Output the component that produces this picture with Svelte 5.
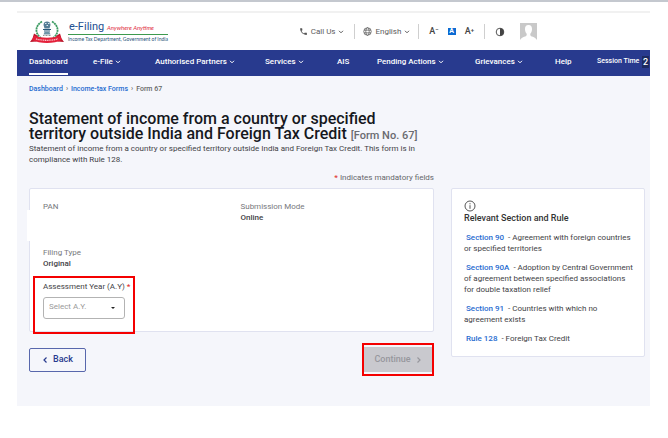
<script lang="ts">
  const menu = [
    { label: "Dashboard", active: true, arrow: false },
    { label: "e-File", active: false, arrow: true },
    { label: "Authorised Partners", active: false, arrow: true },
    { label: "Services", active: false, arrow: true },
    { label: "AIS", active: false, arrow: false },
    { label: "Pending Actions", active: false, arrow: true },
    { label: "Grievances", active: false, arrow: true },
    { label: "Help", active: false, arrow: false },
  ];

  const rules = [
    { name: "Section 90", text: "Agreement with foreign countries or specified territories" },
    {
      name: "Section 90A",
      text: "Adoption by Central Government of agreement between specified associations for double taxation relief",
    },
    { name: "Section 91", text: "Countries with which no agreement exists" },
    { name: "Rule 128", text: "Foreign Tax Credit" },
  ];

  let year = $state("");
</script>

{#snippet chevron()}
  <svg class="chevron" viewBox="0 0 6 4"><path d="M1 .8l2 2 2-2" /></svg>
{/snippet}

<div class="page">
  <header class="top">
    <a class="brand" href="#home">
      <svg class="emblem" viewBox="0 0 36 24">
        <path d="M12 1.5C4.500 6 5 14 11 18" fill="none" stroke="#3c9b62" stroke-width="1.800" stroke-dasharray="2 .6" />
        <path d="M22 1.500C29.500 6 29 14 23 18" fill="none" stroke="#3c9b62" stroke-width="1.800" stroke-dasharray="2 .6" />
        <path d="M13.500 5c0-2.500 1.500-3.500 3.500-3.500s3.500 1 3.500 3.500l-1 3.500h-5z" fill="#557d96" />
        <path d="M15 3.500h1.500M18 3.500h1.500M16.500 5.500h1.500" stroke="#dce8ee" />
        <path d="M13 9.500h8M14 11h6" stroke="#295a7c" stroke-width="1.200" />
        <path d="M14.500 12h5l1 2.500h-7z" fill="#6f95a8" />
        <path d="M13 15.500h8" stroke="#777" stroke-width=".8" stroke-dasharray="1 .5" />
        <path d="M4 13.500l4 2.500-1.500 5.500L0 22l2.500-3.500zM30 13.500L26 16l1.500 5.500 6.500.500-2.500-3.500z" fill="#b9172b" />
        <path d="M4 15.500c7 3 19 3 26 0l2 4.500c-8 4-22 4-30 0z" fill="#e4203a" />
        <path d="M6 18.800c6 2 16 2 22 0" fill="none" stroke="#f7c6cc" stroke-width="1.300" stroke-dasharray="1.200 .6" />
      </svg>
      <span class="brand-text">
        <span class="brand-name">e-Filing <em>Anywhere Anytime</em></span>
        <span class="brand-sub">Income Tax Department, Government of India</span>
      </span>
    </a>

    <div class="tools">
      <button class="tool call">
        <svg class="phone" viewBox="0 0 24 24"><path d="M6.600 10.800c1.400 2.800 3.800 5.100 6.600 6.600l2.200-2.200c.3-.3.700-.4 1-.2 1.100.4 2.300.6 3.600.6.600 0 1 .4 1 1V20c0 .6-.4 1-1 1C10.600 21 3 13.400 3 4c0-.6.400-1 1-1h3.500c.6 0 1 .4 1 1 0 1.300.2 2.500.6 3.600.1.300 0 .7-.2 1z" /></svg>
        Call Us
        {@render chevron()}
      </button>
      <button class="tool lang">
        <svg class="globe" viewBox="0 0 10 10"><circle cx="5" cy="5" r="4.200" /><ellipse cx="5" cy="5" rx="1.900" ry="4.200" /><path d="M1.200 3.500h7.600M1.200 6.500h7.600" /></svg>
        English
        {@render chevron()}
      </button>
      <div class="tool sizes">
        <button aria-label="Decrease text size">A<sup>−</sup></button>
        <button class="normal" aria-label="Normal text size">A</button>
        <button aria-label="Increase text size">A<sup>+</sup></button>
      </div>
      <button class="tool contrast" aria-label="Contrast">
        <svg viewBox="0 0 10 10"><circle cx="5" cy="5" r="3.800" fill="none" stroke="#555" /><path d="M5 1.200a3.800 3.800 0 0 1 0 7.600z" fill="#444" /></svg>
      </button>
      <button class="avatar" aria-label="Profile">
        <svg viewBox="0 0 17 17"><path d="M0 0h17v17H0z" fill="#c9c9c9" /><path d="M8.500 2C5.800 2 4.800 4 5 6.500c.1 2 .8 3.300 1.700 4.200.2 1.500-.2 2.300-1.700 2.900C3 14.400 1.200 15 0 17h17c-1.200-2-3-2.600-5-3.400-1.500-.6-1.900-1.400-1.700-2.900.9-.9 1.600-2.200 1.700-4.200C12.200 4 11.200 2 8.500 2z" fill="#fff" /></svg>
      </button>
    </div>
  </header>

  <nav class="menu">
    {#each menu as item}
      <a class:active={item.active} href="#menu">
        {item.label}
        {#if item.arrow}{@render chevron()}{/if}
      </a>
    {/each}
    <div class="session">Session Time <span>2</span></div>
  </nav>

  <main>
    <nav class="crumbs">
      <a href="#dashboard">Dashboard</a><i>›</i>
      <a href="#forms">Income-tax Forms</a><i>›</i>
      <span>Form 67</span>
    </nav>

    <div class="columns">
      <div class="intro">
        <h1>Statement of income from a country or specified territory outside India and Foreign Tax Credit <small>[Form No. 67]</small></h1>
        <p>Statement of income from a country or specified territory outside India and Foreign Tax Credit. This form is in compliance with Rule 128.</p>
        <p class="mandatory"><b>*</b> Indicates mandatory fields</p>
      </div>

      <div class="form">
        <div class="card details">
          <dl>
            <div><dt>PAN</dt></div>
            <div><dt>Submission Mode</dt><dd>Online</dd></div>
            <div><dt>Filing Type</dt><dd>Original</dd></div>
          </dl>
          <div class="year">
            <label for="year">Assessment Year (A.Y) <b>*</b></label>
            <div class="select">
              <select id="year" bind:value={year}>
                <option value="">Select A.Y.</option>
              </select>
            </div>
          </div>
        </div>

        <div class="actions">
          <button class="back">
            <svg viewBox="0 0 6 8"><path d="M4.500 1.500L2 4l2.500 2.500" /></svg>
            Back
          </button>
          <button class="continue" disabled>
            Continue
            <svg viewBox="0 0 6 8"><path d="M1.500 1.500L4 4 1.500 6.500" /></svg>
          </button>
        </div>
      </div>

      <aside class="card">
        <svg class="info" viewBox="0 0 12 12"><circle cx="6" cy="6" r="5" /><path d="M6 5.200v3.600M6 3.200v1.100" /></svg>
        <h2>Relevant Section and Rule</h2>
        {#each rules as rule}
          <p><a href="#rule">{rule.name}</a> - {rule.text}</p>
        {/each}
      </aside>
    </div>
  </main>
</div>

<style>
  :global(body) {
    margin: 0;
    background: #fff;
  }

  .page {
    padding: 9px 18px 32px 17px;
    border-top: 2px solid #c4c8cf;
    font-family: Roboto, "Liberation Sans", sans-serif;
    font-size: 8px;
    line-height: 11px;
    color: #3f3f46;
  }

  a {
    color: #1f6bd0;
    text-decoration: none;
  }

  button {
    padding: 0;
    border: 0;
    background: none;
    font: inherit;
    color: inherit;
    display: flex;
    align-items: center;
  }

  .chevron {
    width: 6px;
    height: 4px;
    fill: none;
    stroke: currentColor;
  }

  .top {
    display: flex;
    justify-content: space-between;
    height: 37px;
    padding: 0 113px 0 13px;
    border-top: 2px solid #f1f1f1;
  }

  .brand {
    display: flex;
    align-items: center;
    gap: 2px;
  }

  .emblem {
    width: 36px;
    height: 24px;
  }

  .brand-text {
    display: flex;
    flex-direction: column;
  }

  .brand-name {
    padding: 0 1px;
    font-size: 11px;
    line-height: 12px;
    font-weight: 400;
    color: #1d4f91;
    border-bottom: 1px solid #3d9a4e;
    white-space: nowrap;
  }

  .brand-name em {
    font-family: Lato, "Liberation Sans", sans-serif;
    font-size: 6px;
    font-weight: 400;
    color: #e02a3c;
  }

  .brand-sub {
    font-family: Lato, "Liberation Sans", sans-serif;
    font-size: 5px;
    line-height: 8px;
    color: #1d4f78;
  }

  .tools {
    display: flex;
    align-items: center;
    color: #5c5c5c;
  }

  .tool {
    height: 15px;
    padding: 0 10px;
    border-left: 1px solid #cfcfcf;
    gap: 3px;
    line-height: 15px;
  }

  .tool.call {
    border-left: 0;
  }

  .tool.lang {
    padding: 0 8px;
  }

  .phone {
    width: 9px;
    height: 9px;
    fill: #555;
  }

  .globe {
    width: 9px;
    height: 9px;
    fill: none;
    stroke: #555;
    stroke-width: 0.8;
  }

  .tool.sizes {
    display: flex;
    align-items: center;
    gap: 9px;
  }

  .sizes button {
    height: 10px;
    font-size: 9px;
    font-weight: 500;
    color: #444;
  }

  .sizes sup {
    font-size: 6px;
    line-height: 6px;
    align-self: flex-start;
  }

  .sizes .normal {
    width: 8px;
    height: 7px;
    justify-content: center;
    font-size: 7px;
    font-weight: 700;
    background: #0b6bd3;
    color: #fff;
  }

  .contrast svg {
    width: 10px;
    height: 10px;
  }

  .avatar {
    margin-left: 5px;
  }

  .avatar svg {
    width: 17px;
    height: 17px;
  }

  .menu {
    display: grid;
    grid-template-columns: 64fr 62fr 110fr 72fr 40fr 98fr 80fr 42fr 53fr;
    align-items: start;
    height: 26px;
    padding-left: 12px;
    background: #283a8e;
    color: #fff;
    font-weight: 500;
    line-height: 23px;
    white-space: nowrap;
  }

  .menu a {
    justify-self: start;
    color: #fff;
  }

  .menu .active {
    border-bottom: 2px solid #fff;
  }

  .session {
    display: flex;
    align-items: center;
    justify-content: space-between;
    padding-right: 1px;
    font-size: 7px;
  }

  .session span {
    padding: 0 1px;
    background: #1c2a60;
    font-size: 9px;
    line-height: 12px;
  }

  main {
    padding: 8px 5px 30px 12px;
    background: #f5f6fb;
  }

  .crumbs {
    display: flex;
    gap: 3px;
    font-size: 7px;
    line-height: 11px;
    font-weight: 500;
    color: #666;
  }

  .crumbs i {
    font-style: normal;
  }

  .columns {
    display: grid;
    grid-template-columns: 405fr 194fr;
    column-gap: 17px;
    align-items: start;
    padding-top: 16px;
  }

  .intro {
    grid-column: 1;
  }

  h1 {
    margin: 0;
    padding-right: 8px;
    font-size: 16px;
    line-height: 15px;
    font-weight: 500;
    color: #16181d;
  }

  h1 small {
    font-size: 11px;
    color: #6a6b70;
  }

  p {
    margin: 0;
  }

  .mandatory {
    padding: 7px 0 5px;
    text-align: right;
    color: #66676b;
  }

  b {
    font-weight: 500;
    color: #e0322f;
  }

  .form {
    grid-column: 1;
  }

  .card {
    background: #fff;
    border: 1px solid #e0e2f0;
    border-radius: 2px;
  }

  .details {
    position: relative;
    padding: 12px 3px 0;
  }

  /* masked taxpayer number */
  .details::before {
    content: "";
    position: absolute;
    top: 21px;
    left: -3px;
    width: 12px;
    height: 31px;
    background: #fff;
  }

  dl {
    display: grid;
    grid-template-columns: 11fr 10fr;
    row-gap: 24px;
    margin: 0;
    padding: 0 10px;
  }

  dt {
    color: #77787c;
  }

  dd {
    margin: 0;
    font-weight: 500;
  }

  .year {
    position: relative;
    width: 88px;
    margin: 7px 0 -3px;
    padding: 3px 2px 13px 8px;
    border: 2px solid #f40000;
  }

  .year label {
    display: block;
    margin-bottom: 5px;
    white-space: nowrap;
  }

  .select {
    position: relative;
    width: 82px;
  }

  .select::after {
    content: "";
    position: absolute;
    top: 10px;
    right: 10px;
    border: 2px solid transparent;
    border-top-color: #222;
  }

  select {
    display: block;
    box-sizing: border-box;
    width: 100%;
    height: 22px;
    padding: 0 5px 4px;
    appearance: none;
    border: 1px solid #b3b3b3;
    border-radius: 3px;
    background: #fff;
    font: inherit;
    color: #9a9a9a;
  }

  .actions {
    display: flex;
    justify-content: space-between;
    align-items: center;
    padding-top: 11px;
  }

  .actions button {
    box-sizing: border-box;
    justify-content: center;
    gap: 5px;
    font-size: 9px;
    font-weight: 500;
  }

  .actions svg {
    width: 6px;
    height: 8px;
    fill: none;
    stroke: currentColor;
    stroke-width: 1.2;
  }

  .back {
    width: 57px;
    height: 24px;
    border: 1px solid #5867ac;
    border-radius: 2px;
    color: #283a8e;
  }

  .continue {
    width: 72px;
    height: 33px;
    border: 2px solid #f40000;
    background: #c9c9ce content-box;
    padding: 2px 0;
    color: #97979d;
  }

  aside {
    grid-column: 2;
    grid-row: 2;
    padding: 11px 9px 12px 12px;
  }

  .info {
    display: block;
    width: 12px;
    height: 12px;
    fill: none;
    stroke: #555;
  }

  h2 {
    margin: 1px 0 8px;
    font-size: 9px;
    line-height: 11px;
    font-weight: 500;
    color: #333;
  }

  aside p + p {
    margin-top: 8px;
  }

  aside a {
    margin: 0 2px;
    font-weight: 500;
  }
</style>
